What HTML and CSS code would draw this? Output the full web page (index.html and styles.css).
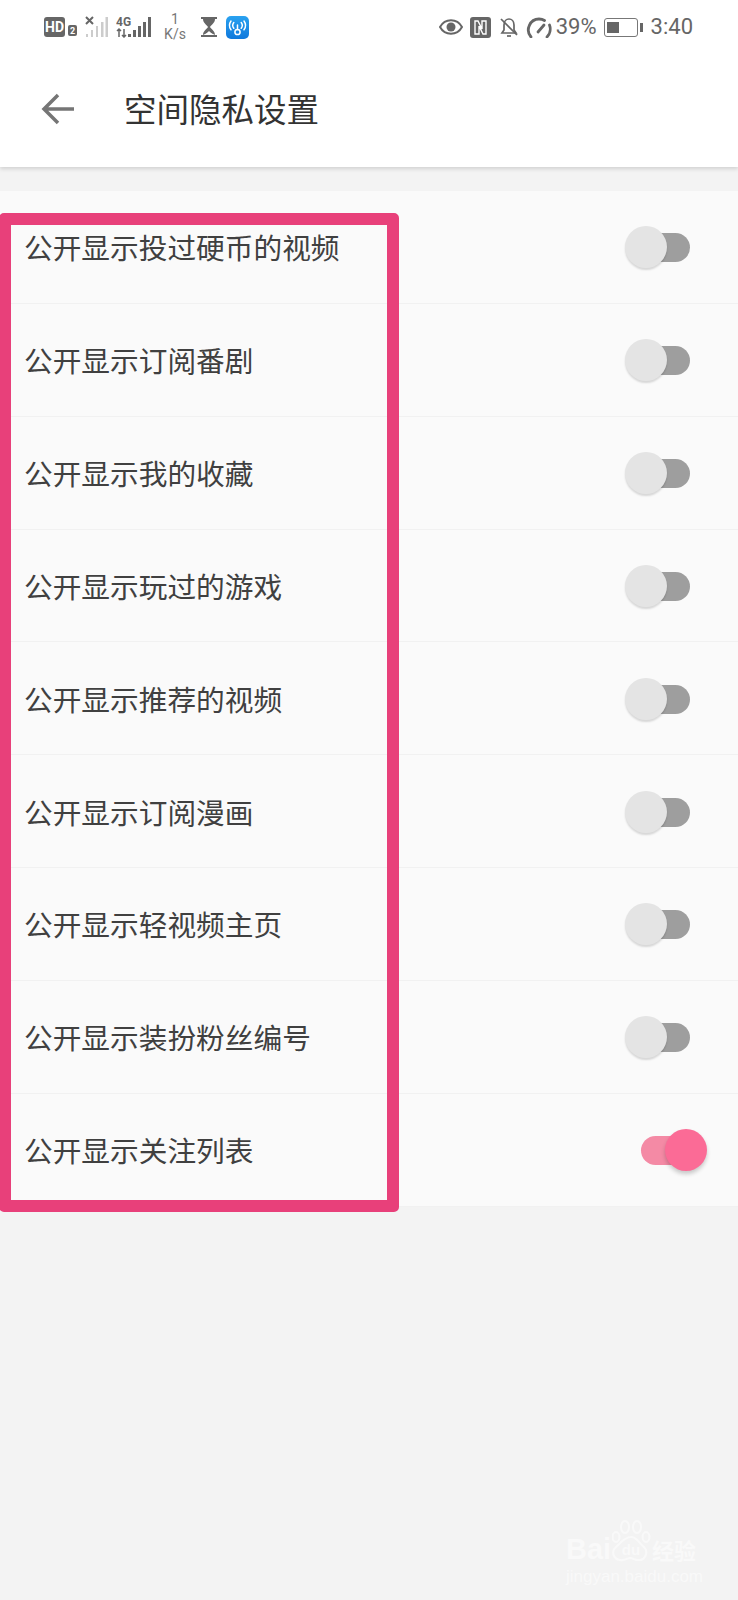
FILE: index.html
```html
<!DOCTYPE html>
<html>
<head>
  <meta charset="UTF-8">
  <meta name="viewport" content="width=device-width, initial-scale=1.0" />
  <title>空间隐私设置</title>
  <link rel="stylesheet" href="styles.css">
</head>

<body>
  <header class="header">
    <div class="status">
      <div class="status-left">
        <svg class="ic-hd" width="33" height="22" viewBox="0 0 33 22">
          <rect x="0" y="1" width="21" height="20" rx="3" fill="#666"/>
          <text x="10.500" y="16" class="hd-text">HD</text>
          <rect x="24" y="9" width="9" height="11" rx="2" fill="#666"/>
          <text x="28.500" y="18" class="hd-two">2</text>
        </svg>
        <svg class="ic-sig1" width="23" height="22" viewBox="0 0 23 22">
          <path d="M1 1l7 7M8 1l-7 7" stroke="#666" stroke-width="2" fill="none"/>
          <g fill="#ccc">
            <rect x="1" y="18" width="2" height="3"/>
            <rect x="6" y="14" width="2" height="7"/>
            <rect x="11" y="10" width="2" height="11"/>
            <rect x="16" y="6" width="2.500" height="15"/>
            <rect x="20.500" y="1" width="2.500" height="20"/>
          </g>
        </svg>
        <svg class="ic-sig2" width="35" height="22" viewBox="0 0 35 22">
          <text x="0" y="10" class="sig-text">4G</text>
          <path d="M3 13v8M1 15l2-2 2 2M8 13v8M6 19l2 2 2-2" stroke="#666" stroke-width="1.500" fill="none"/>
          <g fill="#666">
            <rect x="12" y="18" width="3" height="3"/>
            <rect x="17" y="14" width="3" height="7"/>
            <rect x="22" y="10" width="3" height="11"/>
            <rect x="27" y="6" width="3" height="15"/>
            <rect x="32" y="1" width="3" height="20"/>
          </g>
        </svg>
        <div class="speed"><span>1</span><span>K/s</span></div>
        <svg class="ic-glass" width="16" height="20" viewBox="0 0 16 20">
          <path d="M0 1h16M0 19h16" stroke="#666" stroke-width="2"/>
          <path d="M2 2h12c0 4-4 6-5 8 1 2 5 4 5 8l-6-3-6 3c0-4 4-6 5-8-1-2-5-4-5-8z" fill="#666"/>
          <path d="M5 17l3-3 3 3z" fill="#fff"/>
        </svg>
        <svg class="ic-wifi" width="23" height="23" viewBox="0 0 23 23">
          <defs>
            <linearGradient id="wifi-bg" x1="0" y1="0" x2="0" y2="1">
              <stop offset="0" stop-color="#2aa2f0"/>
              <stop offset="1" stop-color="#0f78dc"/>
            </linearGradient>
          </defs>
          <rect width="23" height="23" rx="5" fill="url(#wifi-bg)"/>
          <g stroke="#fff" fill="none" stroke-width="1.500" stroke-linecap="round">
            <circle cx="11.500" cy="16" r="2.600"/>
            <path d="M11.500 13.400V9M7.800 6.500c-1.400 1.800-1.400 4 0 5.800M15.200 6.500c1.400 1.800 1.400 4 0 5.800M5 5c-2 2.800-2 6 0 8.800M18 5c2 2.800 2 6 0 8.800"/>
          </g>
        </svg>
      </div>
      <div class="status-right">
        <svg class="ic-eye" width="24" height="18" viewBox="0 0 24 18">
          <path d="M1 9c5-9 17-9 22 0-5 9-17 9-22 0z" fill="none" stroke="#666" stroke-width="2"/>
          <circle cx="12" cy="9" r="4.500" fill="#666"/>
        </svg>
        <svg class="ic-nfc" width="21" height="21" viewBox="0 0 21 21">
          <rect width="21" height="21" rx="3" fill="#666"/>
          <path d="M7 4H5v13h4V9l4 8h3V4h-4v8L8 4z" fill="none" stroke="#fff" stroke-width="1.400"/>
        </svg>
        <svg class="ic-bell" width="20" height="21" viewBox="0 0 20 21">
          <g fill="none" stroke="#666" stroke-width="1.700">
            <path d="M5 8c0-8 10-8 10 0v5l2 3H3l2-3z"/>
            <path d="M8 19h4"/>
            <path d="M2 2l16 16"/>
          </g>
        </svg>
        <svg class="ic-gauge" width="26" height="21" viewBox="0 0 26 21">
          <g fill="none" stroke="#666" stroke-width="2.800" stroke-linecap="round">
            <path d="M5 20C-1 13 4 2 13 2c2 0 4 .5 5.500 1.500"/>
            <path d="M21 20c3-3 4-8 2.500-12"/>
            <path d="M12 15l6-7"/>
          </g>
        </svg>
        <span class="pct">39%</span>
        <div class="battery">
          <div class="battery-fill"></div>
        </div>
        <div class="battery-nub"></div>
        <span class="clock">3:40</span>
      </div>
    </div>
    <div class="toolbar">
      <svg class="back" width="34" height="32" viewBox="0 0 34 32">
        <path d="M33 16H3M17 2L3 16l14 14" fill="none" stroke="#757575" stroke-width="3.500"/>
      </svg>
      <h1 class="title">空间隐私设置</h1>
    </div>
  </header>

  <main class="list">
    <div class="row"><span class="row-label">公开显示投过硬币的视频</span><div class="switch"><div class="track"></div><div class="thumb"></div></div></div>
    <div class="row"><span class="row-label">公开显示订阅番剧</span><div class="switch"><div class="track"></div><div class="thumb"></div></div></div>
    <div class="row"><span class="row-label">公开显示我的收藏</span><div class="switch"><div class="track"></div><div class="thumb"></div></div></div>
    <div class="row"><span class="row-label">公开显示玩过的游戏</span><div class="switch"><div class="track"></div><div class="thumb"></div></div></div>
    <div class="row"><span class="row-label">公开显示推荐的视频</span><div class="switch"><div class="track"></div><div class="thumb"></div></div></div>
    <div class="row"><span class="row-label">公开显示订阅漫画</span><div class="switch"><div class="track"></div><div class="thumb"></div></div></div>
    <div class="row"><span class="row-label">公开显示轻视频主页</span><div class="switch"><div class="track"></div><div class="thumb"></div></div></div>
    <div class="row"><span class="row-label">公开显示装扮粉丝编号</span><div class="switch"><div class="track"></div><div class="thumb"></div></div></div>
    <div class="row"><span class="row-label">公开显示关注列表</span><div class="switch on"><div class="track"></div><div class="thumb"></div></div></div>
  </main>

  <div class="highlight"></div>

  <div class="watermark">
    <div class="wm-top">
      <span class="wm-bai">Bai</span>
      <svg class="wm-paw" width="40" height="44" viewBox="0 0 40 44">
        <g fill="none" stroke="#f9f9f9" stroke-width="2">
          <ellipse cx="4" cy="17" rx="3.500" ry="5"/>
          <ellipse cx="13" cy="7" rx="4" ry="6"/>
          <ellipse cx="25" cy="7" rx="4" ry="6"/>
          <ellipse cx="34" cy="17" rx="3.500" ry="5"/>
          <path d="M19 17c6 0 8 6 13 10 5 5 1 14-6 13-4 0-5-2-8-2s-5 3-10 2c-7-1-9-9-4-13 5-4 8-10 15-10z"/>
        </g>
        <text x="19" y="35" class="wm-du">du</text>
      </svg>
      <span class="wm-jy">经验</span>
    </div>
    <div class="wm-url">jingyan.baidu.com</div>
  </div>
</body>

</html>
```

FILE: styles.css
```css
* {
  box-sizing: border-box;
  padding: 0;
  margin: 0;
}

html, body {
  height: 100%;
}

body {
  position: relative;
  overflow: hidden;
  background: #f3f3f3;
  font-family: "Noto Sans CJK SC", "Noto Sans", sans-serif;
}

svg {
  display: block;
  flex: none;
}

.header {
  height: 167px;
  background: #fff;
  box-shadow: 0 2px 4px rgba(0, 0, 0, .14);
}

.status {
  display: flex;
  justify-content: space-between;
  align-items: center;
  height: 52px;
  padding: 2px 45px 0 44px;
  color: #666;
  font-family: Roboto, sans-serif;
}

.status-left,
.status-right {
  display: flex;
  align-items: center;
}

.hd-text {
  fill: #fff;
  font: 700 14px Roboto, sans-serif;
  text-anchor: middle;
}

.hd-two {
  fill: #fff;
  font: 700 9px Roboto, sans-serif;
  text-anchor: middle;
}

.sig-text {
  fill: #666;
  font: 700 12px "Liberation Sans Narrow", Roboto, sans-serif;
}

.ic-sig1 {
  margin-left: 8px;
}

.ic-sig2 {
  margin-left: 8px;
}

.speed {
  display: flex;
  flex-direction: column;
  align-items: center;
  width: 24px;
  margin-left: 12px;
  font-size: 14px;
  line-height: 15px;
  color: #777;
}

.ic-glass {
  margin-left: 14px;
}

.ic-wifi {
  margin-left: 9px;
}

.ic-nfc {
  margin-left: 7px;
}

.ic-bell {
  margin-left: 8px;
}

.ic-gauge {
  margin-left: 7px;
}

.pct {
  margin-left: 4px;
  font-size: 22px;
  line-height: 26px;
}

.battery {
  width: 34px;
  height: 19px;
  margin-left: 7px;
  padding: 3px 2px;
  border: 1px solid #777;
  border-radius: 3px;
}

.battery-fill {
  width: 12px;
  height: 100%;
  background: #666;
}

.battery-nub {
  width: 3px;
  height: 9px;
  margin-left: 2px;
  background: #666;
}

.clock {
  margin-left: 8px;
  font-size: 22px;
  line-height: 26px;
}

.toolbar {
  display: flex;
  align-items: center;
  height: 115px;
  padding: 0 0 2px 41px;
}

.title {
  margin: 0 0 2px 49px;
  font-size: 32.5px;
  font-weight: 400;
  color: #333;
}

.list {
  margin-top: 24px;
  background: #fafafa;
}

.row {
  display: flex;
  justify-content: space-between;
  align-items: center;
  height: 112.85px;
  padding: 0 0 0 24px;
  border-bottom: 1px solid #f1f1f1;
}

.row-label {
  font-size: 28.7px;
  color: #404040;
}

.switch {
  position: relative;
  width: 66px;
  height: 42px;
  margin: 1px 48px 0 0;
}

.track {
  position: absolute;
  top: 7px;
  right: 0;
  width: 50px;
  height: 29px;
  border-radius: 15px;
  background: #9e9e9e;
}

.thumb {
  position: absolute;
  top: 0;
  left: 1px;
  width: 42px;
  height: 42px;
  border-radius: 50%;
  background: #e4e4e4;
  box-shadow: 0 2px 2px rgba(0, 0, 0, .14);
}

.switch.on {
  margin: 0 32px 0 0;
}

.switch.on .track {
  left: 1px;
  right: auto;
  background: #f48aa5;
}

.switch.on .thumb {
  left: 25px;
  background: #fb6b96;
  box-shadow: 0 3px 4px rgba(0, 0, 0, .2);
}

/* annotation frame drawn on top of the list */
.highlight {
  position: absolute;
  left: -1px;
  top: 213px;
  width: 400px;
  height: 999px;
  border: 12px solid #e8407a;
  border-radius: 5px;
}

.watermark {
  position: absolute;
  left: 566px;
  top: 1520px;
  color: #f9f9f9;
}

.wm-top {
  display: flex;
  align-items: flex-end;
}

.wm-bai {
  font: 700 29px/30px "Liberation Sans", sans-serif;
  width: 46px;
}

.wm-du {
  fill: #f9f9f9;
  font: 700 15px "Liberation Sans", sans-serif;
  text-anchor: middle;
}

.wm-jy {
  font-size: 22px;
  line-height: 30px;
  font-weight: 700;
}

.wm-url {
  margin-top: 3px;
  font: 400 17px/20px "Liberation Sans", sans-serif;
}
```
